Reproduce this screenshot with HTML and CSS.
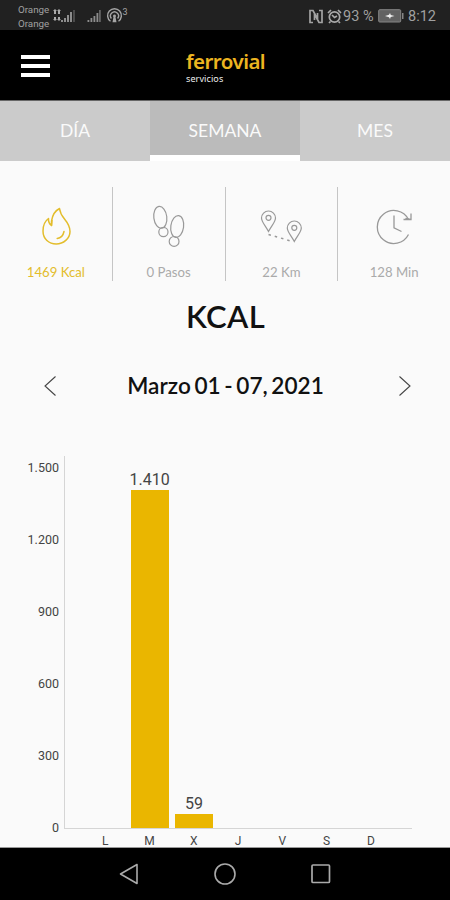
FILE: index.html
```html
<!DOCTYPE html>
<html lang="es">
<head>
    <meta charset="UTF-8">
    <meta name="viewport" content="width=device-width, initial-scale=1.0">
    <title>Ferrovial Servicios</title>
    <link rel="stylesheet" href="styles.css">
</head>
<body>
    <div class="status-bar">
        <div class="status-left">
            <div class="carriers">
                <span>Orange</span>
                <span>Orange</span>
            </div>
            <svg class="signals" width="78" height="20" viewBox="0 0 78 20" fill="#8d8d8d">
                <path d="M3 3l2 2H4v3H2V5H1zM7 3l2 2H8v3H6V5H5zM3 15l-2-2h1v-2h2v2h1zM7 15l-2-2h1v-2h2v2h1z" fill="#aaa"/>
                <path d="M9 14h2v2H9zM12 12h2v4h-2zM15 9h2v7h-2zM18 6h2v10h-2z"/>
                <path d="M21 4h2v12h-2z" fill="#4b4b4b"/>
                <path d="M35.500 14h1.800v2h-1.800zM38.500 12h1.800v4h-1.800zM41.500 10h1.800v6h-1.800zM44.500 7h1.800v9h-1.800z"/>
                <path d="M47 4h1.800v12H47z" fill="#666"/>
                <g fill="none" stroke="#a5a5a5" stroke-width="1.400">
                    <path d="M58.500 15.200a6.900 6.900 0 1 1 8 0"/>
                    <path d="M59.400 12.500a4 4 0 1 1 6.200 0"/>
                </g>
                <path d="M62.500 8.500a1.500 1.500 0 0 1 1 2.600l1 5.200h-4l1-5.200a1.500 1.500 0 0 1 1-2.600z" fill="#a5a5a5"/>
                <text class="hotspot-count" x="70.500" y="9">3</text>
            </svg>
        </div>
        <div class="status-right">
            <svg width="14" height="15" viewBox="0 0 14 15" fill="none" stroke="#a3a3a3" stroke-width="1.700">
                <path d="M4 13.500H1V1.500h3l4.500 8.500V4"/>
                <path d="M10 1.500h3v12h-3L5.500 5v6"/>
            </svg>
            <svg class="alarm" width="15" height="15" viewBox="0 0 15 15" fill="none" stroke="#a8a8a8" stroke-width="1.700">
                <circle cx="7.500" cy="8" r="5.200"/>
                <path d="M1 4l3-3M14 4l-3-3M3.500 12.500L2 14M11.500 12.500L13 14M5 6l2.500 2.500L10 7"/>
            </svg>
            <span class="percent">93 %</span>
            <svg class="battery" width="26" height="14" viewBox="0 0 26 14">
                <rect x=".7" y=".7" width="22" height="12.300" rx="1" fill="#626262" stroke="#858585"/>
                <path d="M24 4h1.500v6H24z" fill="#858585"/>
                <path d="M7 7l4-1.200L12 4l.8 2L16.500 7l-3.800 1L12 10l-1-1.800z" fill="#eee"/>
            </svg>
            <span class="clock">8:12</span>
        </div>
    </div>

    <header class="header">
        <div class="menu">
            <span></span>
            <span></span>
            <span></span>
        </div>
        <div class="logo">
            <div class="logo-name">ferrovial</div>
            <div class="logo-sub">servicios</div>
        </div>
    </header>

    <nav class="tabs">
        <div class="tab">DÍA</div>
        <div class="tab active">SEMANA</div>
        <div class="tab">MES</div>
    </nav>

    <main class="content">
        <div class="stats">
            <div class="stat selected">
                <svg width="42" height="44" viewBox="0 0 42 44" fill="none" stroke="currentColor" stroke-width="1.500" stroke-linejoin="round" stroke-linecap="round">
                    <path d="M24.500 3.500c-4 2-7 6.500-8 12.500v4.500c-2-1.500-3.200-4-3-7C10 16 8 20.500 8 26c0 8 6 13 13.200 13S35 33.500 35 26.500c0-5.500-2.200-8.500-5.500-12.500-3-3.600-4.500-6.500-5-10.500z"/>
                    <path d="M17 15.500l-.5 5"/>
                    <path d="M29 26.500c-.8 4-3.200 6.500-6.800 7"/>
                </svg>
                <span>1469 Kcal</span>
            </div>
            <div class="stat">
                <svg width="42" height="44" viewBox="0 0 42 44" fill="none" stroke="currentColor" stroke-width="1.200">
                    <ellipse cx="12.300" cy="12.300" rx="6.500" ry="11" transform="rotate(-7 12.300 12.300)"/>
                    <circle cx="15.400" cy="27" r="4.600"/>
                    <ellipse cx="29.200" cy="21.500" rx="6.400" ry="11" transform="rotate(8 29.200 21.500)"/>
                    <circle cx="26.100" cy="36.400" r="4.900"/>
                </svg>
                <span>0 Pasos</span>
            </div>
            <div class="stat">
                <svg width="42" height="44" viewBox="0 0 42 44" fill="none" stroke="currentColor" stroke-width="1.200">
                    <path d="M8.500 26.500C5.500 20.500 1.500 17 1.500 13a7 7 0 0 1 14 0c0 4-4 7.500-7 13.500z"/>
                    <circle cx="8.500" cy="12.800" r="2.500"/>
                    <path d="M34.300 36.500c-3-6-7-9.500-7-13.500a7 7 0 0 1 14 0c0 4-4 7.500-7 13.500z"/>
                    <circle cx="34.300" cy="22.800" r="2.500"/>
                    <path d="M8.500 29.500l24 7" stroke-dasharray="2.500 4" stroke-width="1.500"/>
                </svg>
                <span>22 Km</span>
            </div>
            <div class="stat">
                <svg width="42" height="44" viewBox="0 0 42 44" fill="none" stroke="currentColor" stroke-width="1.300">
                    <path d="M35.500 29.500A16.500 16.500 0 1 1 35.500 14.500"/>
                    <path d="M30.500 14.500l7.500.2V8.500M32.500 13.500l5 1"/>
                    <path d="M21 10.500v12.300l7.500 3.700"/>
                </svg>
                <span>128 Min</span>
            </div>
        </div>

        <h1 class="title">KCAL</h1>

        <div class="date-nav">
            <svg width="14" height="22" viewBox="0 0 14 22" fill="none" stroke="#444" stroke-width="1.100">
                <path d="M12.500 1.500L2 11l10.500 9.500"/>
            </svg>
            <span>Marzo 01 - 07, 2021</span>
            <svg width="14" height="22" viewBox="0 0 14 22" fill="none" stroke="#444" stroke-width="1.100">
                <path d="M1.500 1.500L12 11 1.500 20.500"/>
            </svg>
        </div>

        <div class="chart">
            <div class="y-axis">
                <span>1.500</span>
                <span>1.200</span>
                <span>900</span>
                <span>600</span>
                <span>300</span>
                <span>0</span>
            </div>
            <div class="plot">
                <div class="col"></div>
                <div class="col"><span>1.410</span><div class="bar" style="height: 338px"></div></div>
                <div class="col"><span>59</span><div class="bar" style="height: 14px"></div></div>
                <div class="col"></div>
                <div class="col"></div>
                <div class="col"></div>
                <div class="col"></div>
            </div>
            <div class="x-axis">
                <span>L</span>
                <span>M</span>
                <span>X</span>
                <span>J</span>
                <span>V</span>
                <span>S</span>
                <span>D</span>
            </div>
        </div>
    </main>

    <div class="nav-bar">
        <svg width="24" height="24" viewBox="0 0 24 24" fill="none" stroke="#aaa" stroke-width="1.600" stroke-linejoin="round">
            <path d="M20 2.500v19L3.500 12z"/>
        </svg>
        <svg width="24" height="24" viewBox="0 0 24 24" fill="none" stroke="#aaa" stroke-width="1.600">
            <circle cx="12" cy="12" r="10"/>
        </svg>
        <svg width="24" height="24" viewBox="0 0 24 24" fill="none" stroke="#aaa" stroke-width="1.700">
            <rect x="3" y="3" width="17.500" height="17.500" rx="1"/>
        </svg>
    </div>
</body>
</html>
```

FILE: styles.css
```css
* {
    box-sizing: border-box;
}
body {
    margin: 0;
    width: 450px;
    height: 900px;
    overflow: hidden;
    display: flex;
    flex-direction: column;
    background-color: #fafafa;
    font-family: Lato, sans-serif;
}
svg {
    display: block;
    flex-shrink: 0;
}

/* status bar */
.status-bar {
    height: 30px;
    flex-shrink: 0;
    display: flex;
    justify-content: space-between;
    background-color: #212121;
    color: #a0a0a0;
    font-family: Roboto, sans-serif;
}
.status-left {
    display: flex;
    padding: 3px 0 0 18px;
}
.carriers {
    display: flex;
    flex-direction: column;
    width: 34px;
    font-size: 9.8px;
    line-height: 13.5px;
}
.signals {
    margin-top: 3px;
}
.hotspot-count {
    font-size: 9px;
    fill: #a5a5a5;
}
.status-right {
    display: flex;
    align-items: center;
    padding: 2px 14px 0 0;
    font-size: 14.5px;
}
.alarm {
    margin-left: 4px;
}
.percent {
    margin-left: 1px;
    width: 34px;
    white-space: nowrap;
}
.battery {
    margin-left: 1px;
}
.clock {
    margin-left: 4px;
}

/* header */
.header {
    height: 70px;
    flex-shrink: 0;
    display: grid;
    grid-template-columns: 1fr 80px 1fr;
    align-items: center;
    background-color: #000;
}
.menu {
    display: flex;
    flex-direction: column;
    gap: 4.5px;
    padding-left: 21px;
    margin-top: 2px;
}
.menu span {
    width: 29px;
    height: 4.5px;
    background-color: #fff;
}
.logo {
    padding-left: 1px;
    font-family: "Noto Sans", sans-serif;
    white-space: nowrap;
}
.logo-name {
    font-size: 20.5px;
    line-height: 28px;
    font-weight: 600;
    letter-spacing: -0.55px;
    color: #edb520;
}
.logo-sub {
    font-size: 9px;
    line-height: 10px;
    letter-spacing: 0.1px;
    margin-top: -1px;
    color: #eee;
}

/* tabs */
.tabs {
    height: 61px;
    flex-shrink: 0;
    display: flex;
    border-top: 1px solid #676767;
}
.tab {
    flex: 1;
    height: 60px;
    line-height: 59px;
    text-align: center;
    font-size: 17.5px;
    color: #fafafa;
    background-color: #cbcbcb;
}
.tab.active {
    background-color: #bbb;
    border-bottom: 6px solid #fff;
}

/* stats */
.content {
    flex: 1;
    min-height: 0;
    border-bottom: 1px solid #999;
}
.stats {
    display: flex;
    height: 94px;
    margin-top: 26px;
}
.stat {
    flex: 1;
    display: flex;
    flex-direction: column;
    align-items: center;
    padding-top: 18px;
    border-right: 1px solid #c5c5c5;
    font-size: 13.2px;
    line-height: 16px;
    color: #999;
}
.stat:last-child {
    border-right: none;
}
.stat span {
    margin-top: 15px;
    color: #aaa;
}
.stat.selected,
.stat.selected span {
    color: #e3bd2c;
}
.title {
    margin: 16px 0 0;
    padding-left: 1px;
    text-align: center;
    font-size: 31px;
    line-height: 38px;
    letter-spacing: 0.4px;
    font-weight: 600;
    color: #111;
}
.date-nav {
    display: flex;
    justify-content: space-between;
    align-items: center;
    margin-top: 37px;
    padding: 0 38px 0 43px;
    font-size: 22.6px;
    line-height: 28px;
    font-weight: 600;
    word-spacing: -2px;
    color: #111;
}
.date-nav span {
    margin-right: 4px;
}

/* chart */
.chart {
    display: grid;
    grid-template-columns: 64px 348px;
    grid-template-rows: 373px 18px;
    margin-top: 56px;
    font-family: Roboto, sans-serif;
    color: #444;
}
.y-axis {
    display: flex;
    flex-direction: column;
    justify-content: space-between;
    height: 379px;
    padding: 5px 5px 0 0;
    text-align: right;
    font-size: 12.5px;
    line-height: 14px;
}
.plot {
    display: flex;
    padding: 0 18px 0 18px;
    border-left: 1px solid #d5d5d5;
    border-bottom: 1px solid #d5d5d5;
}
.col {
    flex: 1;
    display: flex;
    flex-direction: column;
    justify-content: flex-end;
    align-items: center;
    font-size: 16px;
    line-height: 21px;
}
.bar {
    width: 38px;
    background-color: #eab600;
}
.x-axis {
    grid-column: 2;
    display: flex;
    padding: 5px 19px 0 19px;
    font-size: 12px;
    line-height: 14px;
}
.x-axis span {
    flex: 1;
    text-align: center;
}

/* android navigation */
.nav-bar {
    height: 52px;
    flex-shrink: 0;
    display: flex;
    justify-content: center;
    gap: 72px;
    padding-top: 14px;
    background-color: #000;
}
```
